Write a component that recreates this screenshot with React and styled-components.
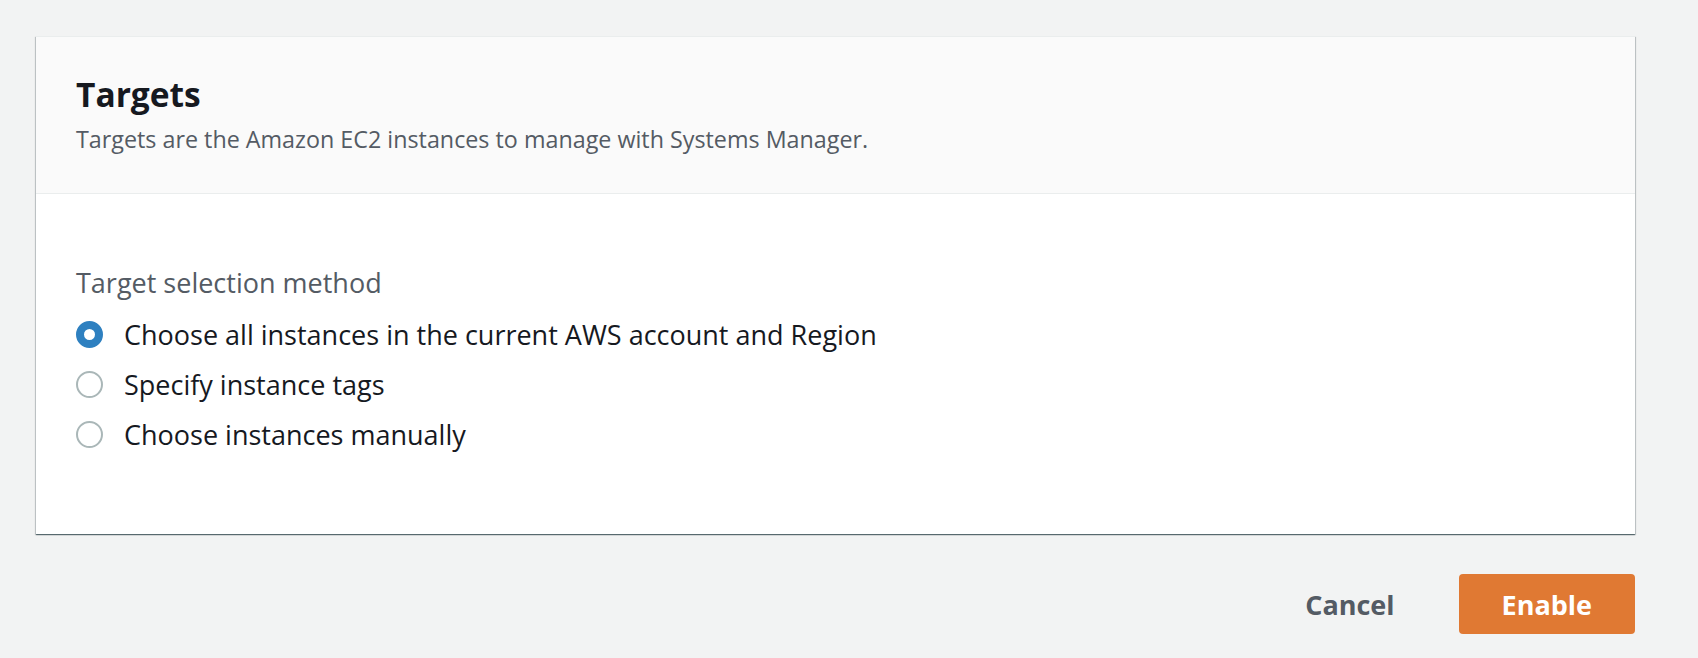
import React, { useState } from 'react';
import styled, { createGlobalStyle } from 'styled-components';

const GlobalStyle = createGlobalStyle`
  body {
    margin: 0;
    background: #f2f3f3;
    font-family: "Open Sans", "Noto Sans", sans-serif;
    color: #16191f;
  }
`;

const Page = styled.div`
  padding: 36px 63px 24px 36px;
`;

const Card = styled.section`
  background: #fff;
  border-top: 1px solid #eaeded;
  box-shadow: 0 1px 1px 0 rgba(0, 28, 36, 0.5), 1px 1px 1px 0 rgba(0, 28, 36, 0.15),
    -1px 1px 1px 0 rgba(0, 28, 36, 0.15);
`;

const CardHeader = styled.header`
  background: #fafafa;
  border-bottom: 1px solid #eaeded;
  padding: 35px 40px 38px;
`;

const Title = styled.h2`
  margin: 0;
  font-size: 33.5px;
  line-height: 44px;
  font-weight: 700;
  color: #16191f;
`;

const Description = styled.p`
  margin: 7px 0 0;
  font-size: 23.3px;
  line-height: 32px;
  color: #545b64;
`;

const CardBody = styled.div`
  padding: 71px 40px 75px;
`;

const Legend = styled.div`
  font-size: 27px;
  line-height: 36px;
  color: #545b64;
  margin-bottom: 8px;
`;

const Option = styled.label`
  display: flex;
  align-items: center;
  gap: 21px;
  height: 50px;
  font-size: 27px;
  color: #16191f;
  cursor: pointer;
`;

const Radio = styled.span`
  box-sizing: border-box;
  width: 27px;
  height: 27px;
  border-radius: 50%;
  flex-shrink: 0;
  border: ${p => (p.checked ? '8.5px solid #2e80c0' : '2.5px solid #aab7b8')};
  background: #fff;
`;

const Footer = styled.div`
  display: flex;
  justify-content: flex-end;
  align-items: center;
  gap: 21px;
  margin-top: 40px;
`;

const Button = styled.button`
  font-family: inherit;
  font-size: 27px;
  font-weight: 700;
  height: 60px;
  padding: 0 43px;
  border-radius: 4px;
  border: none;
  cursor: pointer;
  background: ${p => (p.primary ? '#e07933' : 'transparent')};
  color: ${p => (p.primary ? '#fff' : '#545b64')};
`;

const options = [
  'Choose all instances in the current AWS account and Region',
  'Specify instance tags',
  'Choose instances manually',
];

export default function App() {
  const [selected, setSelected] = useState(0);
  return (
    <Page>
      <GlobalStyle />
      <Card>
        <CardHeader>
          <Title>Targets</Title>
          <Description>Targets are the Amazon EC2 instances to manage with Systems Manager.</Description>
        </CardHeader>
        <CardBody>
          <Legend>Target selection method</Legend>
          {options.map((o, i) => (
            <Option key={o} onClick={() => setSelected(i)}>
              <Radio checked={selected === i} />
              {o}
            </Option>
          ))}
        </CardBody>
      </Card>
      <Footer>
        <Button>Cancel</Button>
        <Button primary>Enable</Button>
      </Footer>
    </Page>
  );
}
